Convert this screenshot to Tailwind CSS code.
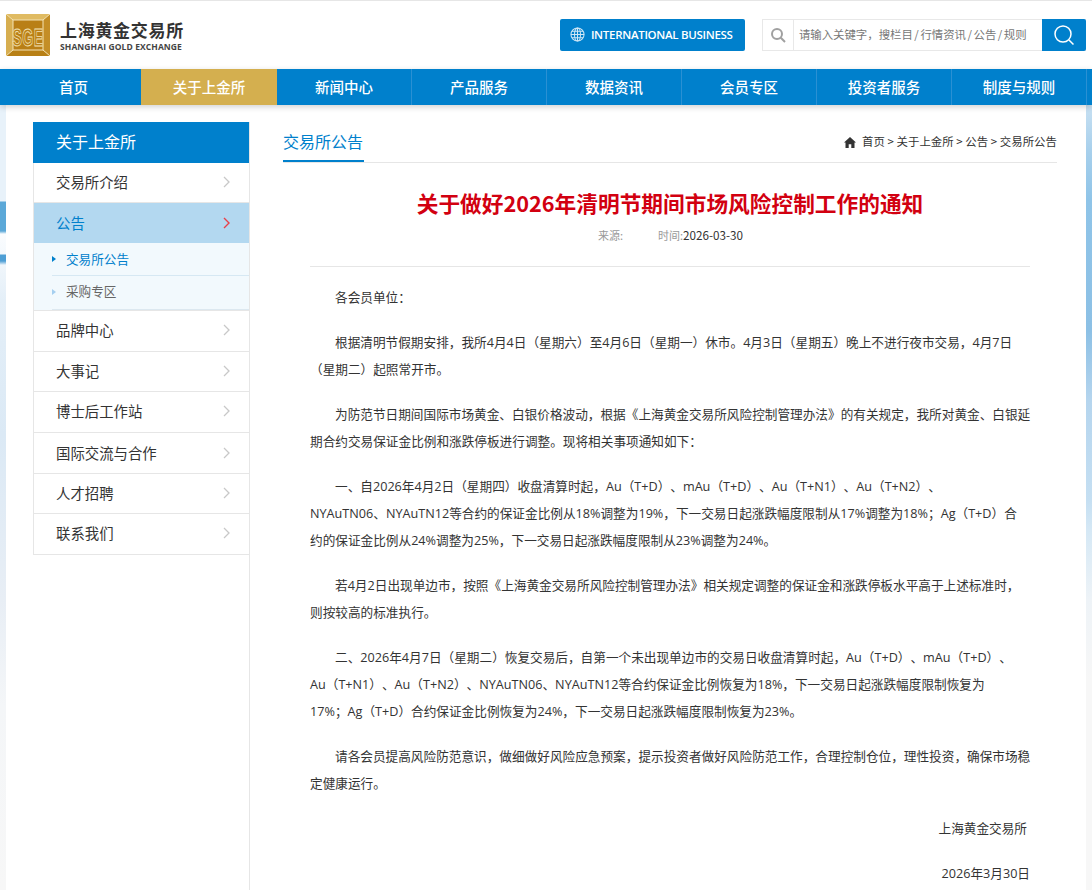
<!DOCTYPE html>
<html lang="zh-CN">
<head>
    <meta charset="UTF-8">
    <title>上海黄金交易所</title>
    <script src="https://cdn.jsdelivr.net/npm/@tailwindcss/browser@4"></script>
</head>
<body class="h-[890px] overflow-hidden bg-white font-['Noto_Sans_CJK_SC','Noto_Sans',sans-serif] text-[#333]">

    <!-- Header -->
    <header class="flex h-[69px] items-start border-t border-[#e6e6e6] bg-white">
        <a class="ml-[6px] mt-[13px] flex">
            <svg width="44" height="42" viewBox="0 0 44 42">
                <rect width="44" height="42" fill="#b97f16"/>
                <polygon points="0,0 44,0 37,6 7,6" fill="#e0bb62"/>
                <polygon points="0,0 7,6 7,36 0,42" fill="#d7ae50"/>
                <polygon points="0,42 7,36 37,36 44,42" fill="#b88016"/>
                <polygon points="44,0 37,6 37,36 44,42" fill="#c48e26"/>
                <path d="M0 0 7 6M44 0 37 6M0 42 7 36M44 42 37 36" stroke="#f3e3b5" stroke-width="1"/>
                <rect x="7" y="6" width="30" height="30" fill="#b97f16" stroke="#f3e3b5" stroke-width="1"/>
                <text transform="translate(22 31.500) scale(1 1.700)" text-anchor="middle" font-family="Liberation Sans" font-weight="700" font-size="14" letter-spacing="0.500" fill="#b97f16" stroke="#f3e3b5" stroke-width="0.500">SGE</text>
            </svg>
        </a>
        <div class="ml-[10px] mt-[17px] flex flex-col">
            <div class="text-[17px] leading-[24px] font-bold tracking-[0.7px] text-[#333]">上海黄金交易所</div>
            <div class="font-['Open_Sans'] text-[8.5px] leading-[10px] font-bold tracking-[0.1px] text-[#444]">SHANGHAI GOLD EXCHANGE</div>
        </div>

        <a class="ml-[376px] mt-[18px] flex h-[32px] w-[185px] items-center rounded-[2px] bg-[#0080cc] pl-[10px] pb-[1px] text-white">
            <svg width="15" height="15" viewBox="0 0 16 16" fill="none" stroke="#cfe6f5" stroke-width="1.1">
                <circle cx="8" cy="8" r="7"/>
                <ellipse cx="8" cy="8" rx="3.2" ry="7"/>
                <path d="M8 1v14M1 8h14M2 4.500h12M2 11.500h12"/>
            </svg>
            <span class="ml-[6px] font-['Open_Sans'] text-[11.5px] font-semibold tracking-[-0.3px]">INTERNATIONAL BUSINESS</span>
        </a>

        <div class="ml-[17px] mt-[18px] flex h-[32px] w-[324px] border border-[#e8e8e8]">
            <div class="flex w-[31px] items-center justify-center border-r border-[#e8e8e8]">
                <svg width="16" height="16" viewBox="0 0 16 16" fill="none" stroke="#a0a0a0" stroke-width="2">
                    <circle cx="7" cy="7" r="5"/>
                    <path d="M10.800 10.800 15 15"/>
                </svg>
            </div>
            <div class="flex-1 pl-[5px] text-[11.4px] leading-[29px] whitespace-nowrap text-[#777] [word-spacing:-1px]">请输入关键字&#65292;搜栏目 / 行情资讯 / 公告 / 规则</div>
            <div class="mr-[-1px] mt-[-1px] flex h-[32px] w-[44px] items-center justify-center rounded-r-[2px] bg-[#0080cc]">
                <svg width="22" height="22" viewBox="0 0 22 22" fill="none" stroke="#fff" stroke-width="1.5">
                    <circle cx="10" cy="10" r="8"/>
                    <path d="M16 16l4.500 4.500"/>
                </svg>
            </div>
        </div>
    </header>

    <!-- Nav -->
    <nav class="relative z-10 flex h-[36px] bg-[#0080cc] pl-[6px] pr-[5px] text-[14.5px] leading-[36px] font-medium text-white shadow-[0_2px_6px_rgba(0,0,0,0.18)]">
        <a class="w-[135px] text-center">首页</a>
        <a class="w-[136px] bg-[#d4af4f] text-center">关于上金所</a>
        <a class="w-[135px] border-r border-[#2a90d3] text-center">新闻中心</a>
        <a class="w-[135px] border-r border-[#2a90d3] text-center">产品服务</a>
        <a class="w-[135px] border-r border-[#2a90d3] text-center">数据资讯</a>
        <a class="w-[135px] border-r border-[#2a90d3] text-center">会员专区</a>
        <a class="w-[135px] border-r border-[#2a90d3] text-center">投资者服务</a>
        <a class="w-[135px] border-r border-[#2a90d3] text-center">制度与规则</a>
    </nav>

    <div class="flex h-[785px]">
        <!-- page background strips -->
        <div class="w-[6px] bg-[linear-gradient(#e8f2fa_0,#e8f2fa_96px,#5ba8d8_97px,#5ba8d8_126px,#fafcfe_129px,#f4f9fd_149px,#4f9fd5_150px,#4f9fd5_156px,#f0f6fb_160px,#e4eff8_195px,#dbe9f5_330px,#e8eef5_495px,#f4f6f8_600px,#f7f7f7_785px)]"></div>

        <main class="flex w-[1080px] bg-white pl-[27px]">
            <!-- Sidebar -->
            <aside class="mt-[17px] w-[217px] border-r border-[#e6e6e6]">
                <div class="h-[41px] bg-[#0080cc] pl-[23px] pb-[1px] text-[16px] leading-[39px] text-white">关于上金所</div>
                <ul class="border-l border-[#e6e6e6] text-[14.4px]">
                    <li class="flex h-[40px] items-center justify-between border-b border-[#e6e6e6] pb-[1px] pl-[22px] pr-[19px]">
                        交易所介绍
                        <svg width="7" height="12" viewBox="0 0 7 12" fill="none" stroke="#c8c8c8" stroke-width="1.3"><path d="M1 1l5 5-5 5"/></svg>
                    </li>
                    <li class="flex h-[40px] items-center justify-between bg-[#b3d8f0] pb-[1px] pl-[22px] pr-[19px] text-[#0080cc]">
                        公告
                        <svg width="7" height="12" viewBox="0 0 7 12" fill="none" stroke="#e8404a" stroke-width="1.4"><path d="M1 1l5 5-5 5"/></svg>
                    </li>
                    <li class="h-[68px] border-b border-[#e6e6e6] bg-[#f2f9fd] pl-[18px] text-[12.6px]">
                        <div class="flex h-[33px] items-center border-b border-[#d6e8f3] text-[#0080cc]">
                            <span class="h-0 w-0 border-y-[3px] border-l-[4px] border-y-transparent border-l-[#0080cc]"></span>
                            <span class="ml-[10px]">交易所公告</span>
                        </div>
                        <div class="flex h-[34px] items-center border-b border-[#dce8f0] pb-[2px] text-[#666]">
                            <span class="h-0 w-0 border-y-[3px] border-l-[4px] border-y-transparent border-l-[#a5cff0]"></span>
                            <span class="ml-[10px]">采购专区</span>
                        </div>
                    </li>
                    <li class="flex h-[41px] items-center justify-between border-b border-[#e6e6e6] pb-[2px] pl-[22px] pr-[19px]">
                        品牌中心
                        <svg width="7" height="12" viewBox="0 0 7 12" fill="none" stroke="#c8c8c8" stroke-width="1.3"><path d="M1 1l5 5-5 5"/></svg>
                    </li>
                    <li class="flex h-[40px] items-center justify-between border-b border-[#e6e6e6] pb-[1px] pl-[22px] pr-[19px]">
                        大事记
                        <svg width="7" height="12" viewBox="0 0 7 12" fill="none" stroke="#c8c8c8" stroke-width="1.3"><path d="M1 1l5 5-5 5"/></svg>
                    </li>
                    <li class="flex h-[41px] items-center justify-between border-b border-[#e6e6e6] pb-[2px] pl-[22px] pr-[19px]">
                        博士后工作站
                        <svg width="7" height="12" viewBox="0 0 7 12" fill="none" stroke="#c8c8c8" stroke-width="1.3"><path d="M1 1l5 5-5 5"/></svg>
                    </li>
                    <li class="flex h-[41px] items-center justify-between border-b border-[#e6e6e6] pb-[1px] pl-[22px] pr-[19px]">
                        国际交流与合作
                        <svg width="7" height="12" viewBox="0 0 7 12" fill="none" stroke="#c8c8c8" stroke-width="1.3"><path d="M1 1l5 5-5 5"/></svg>
                    </li>
                    <li class="flex h-[40px] items-center justify-between border-b border-[#e6e6e6] pb-[1px] pl-[22px] pr-[19px]">
                        人才招聘
                        <svg width="7" height="12" viewBox="0 0 7 12" fill="none" stroke="#c8c8c8" stroke-width="1.3"><path d="M1 1l5 5-5 5"/></svg>
                    </li>
                    <li class="flex h-[41px] items-center justify-between border-b border-[#e6e6e6] pb-[2px] pl-[22px] pr-[19px]">
                        联系我们
                        <svg width="7" height="12" viewBox="0 0 7 12" fill="none" stroke="#c8c8c8" stroke-width="1.3"><path d="M1 1l5 5-5 5"/></svg>
                    </li>
                </ul>
            </aside>

            <!-- Content -->
            <section class="ml-[33px] mt-[17px] w-[774px]">
                <div class="flex h-[41px] items-start justify-between border-b border-[#e6e6e6]">
                    <h2 class="h-[40px] border-b-2 border-[#0080cc] pr-[1px] text-[16px] leading-[38px] text-[#0080cc]">交易所公告</h2>
                    <div class="flex h-[40px] items-center text-[11.4px] tracking-[0.05px] text-[#333]">
                        <svg class="mr-[6px]" width="12" height="11" viewBox="0 0 12 11" fill="#333"><path d="M6 0 0 5.500h1.500V11h3.200V7.200h2.600V11h3.200V5.500H12z"/></svg>
                        首页 &gt; 关于上金所 &gt; 公告 &gt; 交易所公告
                    </div>
                </div>

                <h1 class="mt-[25px] text-center text-[21.7px] leading-[30px] font-bold text-[#d20010]">关于做好2026年清明节期间市场风险控制工作的通知</h1>
                <div class="mt-[7px] flex pl-[315px] text-[11px] leading-[20px] text-[#999]">
                    <span class="w-[60px]">来源:</span>
                    <span>时间:<span class="text-[11.7px] text-[#333]">2026-03-30</span></span>
                </div>

                <article class="ml-[27px] mt-[21px] w-[720px] border-t border-[#e6e6e6] pt-[17px] font-['Open_Sans','Noto_Sans_CJK_SC',sans-serif] text-[12.65px] leading-[27px] whitespace-nowrap text-[#333] [text-spacing-trim:space-all]">
                    <p class="pl-[25px]">各会员单位&#65306;</p>
                    <p class="mt-[18px] pl-[25px]">根据清明节假期安排&#65292;我所4月4日&#65288;星期六&#65289;至4月6日&#65288;星期一&#65289;休市。4月3日&#65288;星期五&#65289;晚上不进行夜市交易&#65292;4月7日</p>
                    <p>&#65288;星期二&#65289;起照常开市。</p>
                    <p class="mt-[18px] pl-[25px]">为防范节日期间国际市场黄金、白银价格波动&#65292;根据《上海黄金交易所风险控制管理办法》的有关规定&#65292;我所对黄金、白银延</p>
                    <p>期合约交易保证金比例和涨跌停板进行调整。现将相关事项通知如下&#65306;</p>
                    <p class="mt-[18px] pl-[25px]">一、自2026年4月2日&#65288;星期四&#65289;收盘清算时起&#65292;Au&#65288;T+D&#65289;、mAu&#65288;T+D&#65289;、Au&#65288;T+N1&#65289;、Au&#65288;T+N2&#65289;、</p>
                    <p>NYAuTN06、NYAuTN12等合约的保证金比例从18%调整为19%&#65292;下一交易日起涨跌幅度限制从17%调整为18%&#65307;Ag&#65288;T+D&#65289;合</p>
                    <p>约的保证金比例从24%调整为25%&#65292;下一交易日起涨跌幅度限制从23%调整为24%。</p>
                    <p class="mt-[18px] pl-[25px]">若4月2日出现单边市&#65292;按照《上海黄金交易所风险控制管理办法》相关规定调整的保证金和涨跌停板水平高于上述标准时&#65292;</p>
                    <p>则按较高的标准执行。</p>
                    <p class="mt-[18px] pl-[25px]">二、2026年4月7日&#65288;星期二&#65289;恢复交易后&#65292;自第一个未出现单边市的交易日收盘清算时起&#65292;Au&#65288;T+D&#65289;、mAu&#65288;T+D&#65289;、</p>
                    <p>Au&#65288;T+N1&#65289;、Au&#65288;T+N2&#65289;、NYAuTN06、NYAuTN12等合约保证金比例恢复为18%&#65292;下一交易日起涨跌幅度限制恢复为</p>
                    <p>17%&#65307;Ag&#65288;T+D&#65289;合约保证金比例恢复为24%&#65292;下一交易日起涨跌幅度限制恢复为23%。</p>
                    <p class="mt-[18px] pl-[25px]">请各会员提高风险防范意识&#65292;做细做好风险应急预案&#65292;提示投资者做好风险防范工作&#65292;合理控制仓位&#65292;理性投资&#65292;确保市场稳</p>
                    <p>定健康运行。</p>
                    <p class="mt-[18px] pr-[3px] text-right">上海黄金交易所</p>
                    <p class="mt-[18px] text-right">2026年3月30日</p>
                </article>
            </section>
        </main>

        <div class="w-[6px] bg-[linear-gradient(#c7e0f2_0,#a8d0ec_45px,#8fc4e8_95px,#8cc0e5_225px,#b5d5ee_295px,#c5dff2_395px,#d5e8f5_425px,#eef3f7_495px,#f7f7f7_575px,#f7f7f7_785px)]"></div>
    </div>
</body>
</html>
